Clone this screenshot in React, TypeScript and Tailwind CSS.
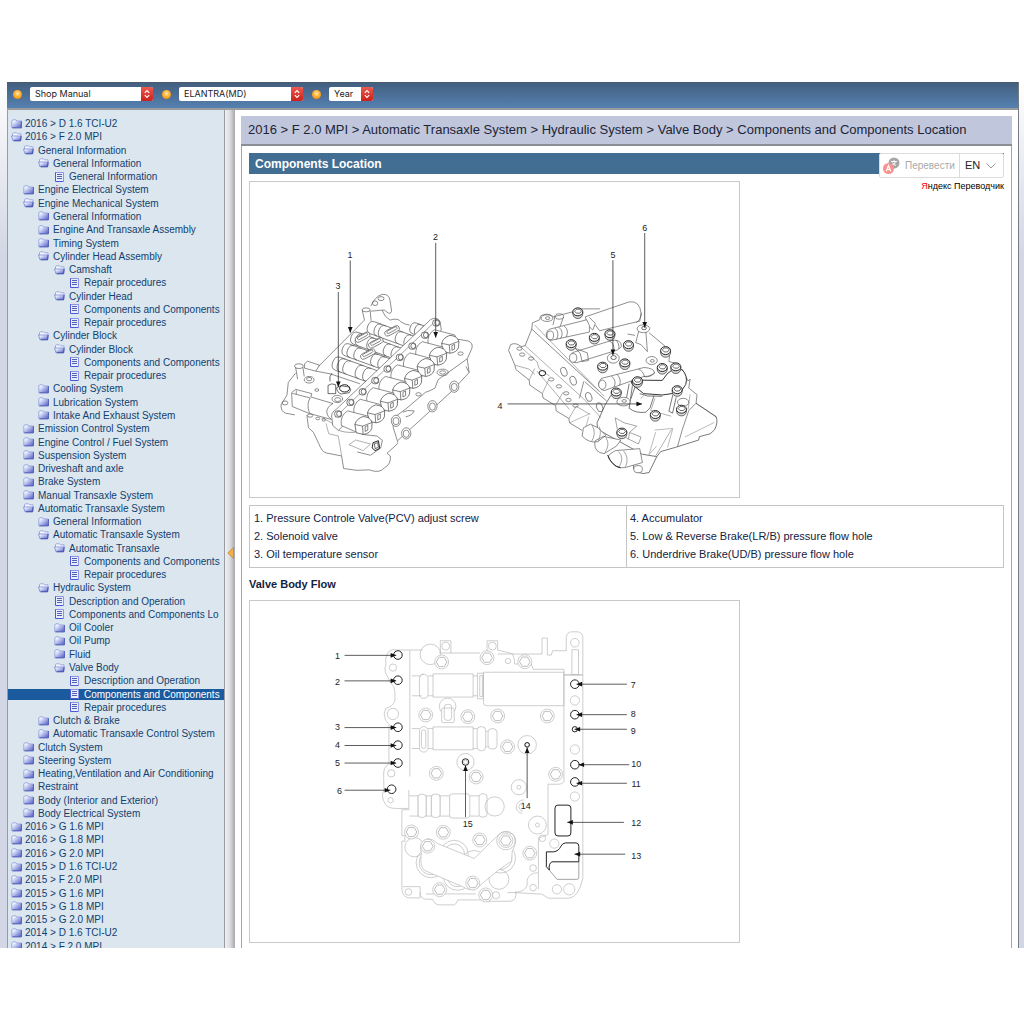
import { ReactNode } from "react";

type IconKind = "closed" | "open" | "page";

interface TreeRow {
  level: number;
  kind: IconKind;
  label: string;
  active?: boolean;
}

const row = (level: number, kind: IconKind, label: string, active = false): TreeRow => ({ level, kind, label, active });

const TREE: TreeRow[] = [
  row(0, "closed", "2016 > D 1.6 TCI-U2"),
  row(0, "open", "2016 > F 2.0 MPI"),
  row(1, "open", "General Information"),
  row(2, "open", "General Information"),
  row(3, "page", "General Information"),
  row(1, "closed", "Engine Electrical System"),
  row(1, "open", "Engine Mechanical System"),
  row(2, "closed", "General Information"),
  row(2, "closed", "Engine And Transaxle Assembly"),
  row(2, "closed", "Timing System"),
  row(2, "open", "Cylinder Head Assembly"),
  row(3, "open", "Camshaft"),
  row(4, "page", "Repair procedures"),
  row(3, "open", "Cylinder Head"),
  row(4, "page", "Components and Components"),
  row(4, "page", "Repair procedures"),
  row(2, "open", "Cylinder Block"),
  row(3, "open", "Cylinder Block"),
  row(4, "page", "Components and Components"),
  row(4, "page", "Repair procedures"),
  row(2, "closed", "Cooling System"),
  row(2, "closed", "Lubrication System"),
  row(2, "closed", "Intake And Exhaust System"),
  row(1, "closed", "Emission Control System"),
  row(1, "closed", "Engine Control / Fuel System"),
  row(1, "closed", "Suspension System"),
  row(1, "closed", "Driveshaft and axle"),
  row(1, "closed", "Brake System"),
  row(1, "closed", "Manual Transaxle System"),
  row(1, "open", "Automatic Transaxle System"),
  row(2, "closed", "General Information"),
  row(2, "open", "Automatic Transaxle System"),
  row(3, "open", "Automatic Transaxle"),
  row(4, "page", "Components and Components"),
  row(4, "page", "Repair procedures"),
  row(2, "open", "Hydraulic System"),
  row(3, "page", "Description and Operation"),
  row(3, "page", "Components and Components Lo"),
  row(3, "closed", "Oil Cooler"),
  row(3, "closed", "Oil Pump"),
  row(3, "closed", "Fluid"),
  row(3, "open", "Valve Body"),
  row(4, "page", "Description and Operation"),
  row(4, "page", "Components and Components", true),
  row(4, "page", "Repair procedures"),
  row(2, "closed", "Clutch & Brake"),
  row(2, "closed", "Automatic Transaxle Control System"),
  row(1, "closed", "Clutch System"),
  row(1, "closed", "Steering System"),
  row(1, "closed", "Heating,Ventilation and Air Conditioning"),
  row(1, "closed", "Restraint"),
  row(1, "closed", "Body (Interior and Exterior)"),
  row(1, "closed", "Body Electrical System"),
  row(0, "closed", "2016 > G 1.6 MPI"),
  row(0, "closed", "2016 > G 1.8 MPI"),
  row(0, "closed", "2016 > G 2.0 MPI"),
  row(0, "closed", "2015 > D 1.6 TCI-U2"),
  row(0, "closed", "2015 > F 2.0 MPI"),
  row(0, "closed", "2015 > G 1.6 MPI"),
  row(0, "closed", "2015 > G 1.8 MPI"),
  row(0, "closed", "2015 > G 2.0 MPI"),
  row(0, "closed", "2014 > D 1.6 TCI-U2"),
  row(0, "closed", "2014 > F 2.0 MPI"),
];

const INDENT = ["pl-[3px] gap-[3px]", "pl-[15px] gap-1", "pl-[30px] gap-1", "pl-[46px] gap-1", "pl-[61px] gap-1"];

function TreeIcon({ kind }: { kind: IconKind }) {
  if (kind === "page") {
    return (
      <svg viewBox="0 0 11 10" className="h-[10px] w-[11px] shrink-0">
        <path d="M1 .5h8.500v9H1z" fill="#e9eeff" />
        <path d="M1.500 0v9.500h8" fill="none" stroke="#4a58dc" />
        <path d="M1.500.5h8v9" fill="none" stroke="#8b94e4" />
        <path d="M3 2.500h5M3 4.500h5M3 6.500h5" stroke="#5560b4" />
      </svg>
    );
  }
  if (kind === "open") {
    return (
      <svg viewBox="0 0 11 10" className="h-[10px] w-[11px] shrink-0">
        <path d="M1.500 4V1.500L2.500.8h3l1 1h3.500V4" fill="#f1f5ff" stroke="#8b99dc" strokeWidth="0.8" />
        <path d="M.5 4h9.800l-.6 4.800H2z" fill="url(#folderFill)" stroke="#6a78cf" strokeWidth="0.7" />
        <path d="M10 4.200l-.4 4.500H3" fill="none" stroke="#454ea8" strokeWidth="0.9" />
      </svg>
    );
  }
  return (
    <svg viewBox="0 0 11 10" className="h-[10px] w-[11px] shrink-0">
      <path d="M.8 8.800V2L1.800.8h3l1 1.200h4.600v6.800z" fill="url(#folderFill)" stroke="#8b99dc" strokeWidth="0.8" />
      <path d="M10.400 2.200v6.600H1.500" fill="none" stroke="#4a53b4" strokeWidth="0.9" />
    </svg>
  );
}

function Tree() {
  return (
    <nav aria-label="Manual contents" className="flex w-[218px] shrink-0 flex-col overflow-hidden border-r border-l border-[#979ba3] bg-[#dbe6ee] pt-[7px]">
      <ul className="-mb-[5px] flex flex-1 flex-col text-[10px] leading-[13px] text-[#123e70]">
        {TREE.map((item, i) => (
          <li key={i} className="flex min-h-[13px] flex-1 items-center">
            <a
              href="#"
              aria-current={item.active ? "page" : undefined}
              className={`flex h-[11px] w-full items-center whitespace-nowrap ${INDENT[item.level]} ${
                item.active ? "bg-[#1c5a9e] text-white" : ""
              }`}
            >
              <TreeIcon kind={item.kind} />
              <span>{item.label}</span>
            </a>
          </li>
        ))}
      </ul>
    </nav>
  );
}

function Picker({ label, value, width }: { label: string; value: string; width: string }) {
  return (
    <div className="flex items-center gap-[8px]">
      <span className="h-[9px] w-[9px] rounded-full bg-[radial-gradient(circle_at_50%_40%,#ffe9b8_0%,#ffb02e_45%,#e0760c_100%)]" />
      <span className={`relative flex h-[14px] ${width}`}>
        <select
          aria-label={label}
          className="h-full w-full appearance-none rounded-[2px] bg-white pl-[5px] font-[family-name:Inter,sans-serif] text-[9px] leading-[14px] text-[#222]"
        >
          <option>{value}</option>
        </select>
        <svg viewBox="0 0 12 14" className="pointer-events-none absolute top-0 right-0 h-[14px] w-[12px]">
          <path d="M0 0h10a2 2 0 0 1 2 2v10a2 2 0 0 1-2 2H0z" fill="url(#stepFill)" />
          <path d="M3.800 5.800L6 3.500l2.200 2.300M3.800 8.200L6 10.500l2.200-2.300" fill="none" stroke="#fff" strokeWidth="1.100" />
        </svg>
      </span>
    </div>
  );
}

function TranslateWidget() {
  return (
    <div className="absolute top-0 right-0 flex flex-col items-end">
      <div className="flex h-[25px] items-stretch rounded-[2px] border border-[#dcdcdc] bg-white">
        <button className="flex w-[80px] items-center gap-[5px] border-r border-[#dcdcdc] pl-[3px] text-[10px] text-[#a9a9a9]">
          <svg viewBox="0 0 17 18" className="h-[18px] w-[17px]">
            <circle cx="11" cy="6" r="5.500" fill="#a6a6a6" />
            <path d="M8 4.500h6M11 3v1.500M9 8.500q3-1 3.500-4M9.500 5.500q1 2.500 3.500 3" stroke="#fff" strokeWidth="0.9" fill="none" />
            <circle cx="5.500" cy="11.500" r="5.500" fill="#f9918f" />
            <path d="M3.300 14.300l2.200-5.800 2.200 5.800M4.100 12.300h2.800" stroke="#fff" strokeWidth="1.200" fill="none" />
          </svg>
          Перевести
        </button>
        <button className="flex w-[43px] items-center justify-between pr-[7px] pl-[5px] text-[11px] text-[#222]">
          EN
          <svg viewBox="0 0 10 6" className="h-[6px] w-[10px]">
            <path d="M.5.500L5 5 9.500.500" fill="none" stroke="#999" />
          </svg>
        </button>
      </div>
      <a href="#" className="mt-[3px] text-[9px] leading-[11px] text-black">
        <span className="text-[#f00]">Я</span>ндекс Переводчик
      </a>
    </div>
  );
}

/* Drawing helpers, all in thirds of a pixel */

type Pt = [number, number];

function Callout({ n, at, from, to }: { n: number; at: Pt; from: Pt; to: Pt }) {
  const angle = (Math.atan2(to[1] - from[1], to[0] - from[0]) * 180) / Math.PI;
  return (
    <g>
      <path d={`M${from[0]} ${from[1]}L${to[0]} ${to[1]}`} stroke="#333" strokeWidth="2.400" />
      <path d="M0 0L-17 -7V7z" transform={`translate(${to[0]} ${to[1]}) rotate(${angle})`} fill="#111" stroke="none" />
      <text x={at[0]} y={at[1] + 10} textAnchor="middle" fontSize="27" fill="#222" stroke="none">
        {n}
      </text>
    </g>
  );
}

function Spool({ x, y, length, r, rings }: { x: number; y: number; length: number; r: number; rings: number[] }) {
  return (
    <g transform={`translate(${x} ${y}) rotate(20)`}>
      <path d={`M0 ${-r}H${length}V${r}H0Q${-r * 0.8} ${r} ${-r * 0.8} 0Q${-r * 0.8} ${-r} 0 ${-r}`} fill="#fff" />
      {rings.map((p) => (
        <path key={p} d={`M${p} ${-r}Q${p - r * 0.8} ${-r} ${p - r * 0.8} 0T${p} ${r}`} fill="none" />
      ))}
    </g>
  );
}

function Bolt({ x, y, r = 13 }: { x: number; y: number; r?: number }) {
  return (
    <g transform={`translate(${x} ${y})`} stroke="#222">
      <path d={`M${-r - 2} 0v7q3 ${r} ${r + 2} ${r}t${r + 2} ${-r}v-7`} fill="#ddd" />
      <ellipse rx={r + 2} ry={r - 1} fill="#fff" strokeWidth="3" />
      <path d={`M${-r + 3} -2l6 -6h10l5 6l-5 6h-10z`} fill="#fff" />
    </g>
  );
}

const SOLENOIDS: Pt[] = [[550, 402], [513, 438], [476, 472], [438, 508], [402, 543], [365, 577], [326, 612], [288, 647]];
const PLATE_BOLTS: Pt[] = [[500, 338], [466, 375], [428, 408], [390, 442], [353, 477], [316, 512], [278, 546], [241, 578], [204, 613]];

function FrontAssembly() {
  return (
    <g transform="translate(60 87)" fill="none" stroke="#555" strokeWidth="2">
      <path d="M145 470L284 330M277 300L284 330M301 300L304 332M303 288Q316 258 338 252Q358 251 361 270L366 303Q363 314 352 306Q345 297 335 300L304 303" />
      <ellipse cx="289" cy="299" rx="12" ry="6" />
      <ellipse cx="334" cy="265" rx="9" ry="6" />
      <ellipse cx="316" cy="279" rx="8" ry="7" />
      <path d="M337 300Q344 320 361 330Q386 322 395 336Q408 344 420 345" />
      <Spool x={435} y={355} length={70} r={17} rings={[15, 32]} />
      <Spool x={308} y={353} length={145} r={19} rings={[22, 36, 90, 118]} />
      <Spool x={258} y={385} length={170} r={19} rings={[15, 52, 105, 130, 148]} />
      <Spool x={232} y={420} length={140} r={19} rings={[16, 38, 92, 115]} />
      <Spool x={204} y={462} length={120} r={21} rings={[16, 34, 74, 98]} />
      <g fill="#fff">
        <rect x="-24" y="-8" width="48" height="17" rx="9" transform="translate(367 362) rotate(-28)" />
        <rect x="-17" y="-4" width="34" height="8" rx="4" transform="translate(367 360) rotate(-28)" />
        <rect x="-24" y="-8" width="48" height="17" rx="9" transform="translate(278 381) rotate(-28)" />
        <rect x="-17" y="-4" width="34" height="8" rx="4" transform="translate(278 379) rotate(-28)" />
        <rect x="-24" y="-8" width="48" height="17" rx="9" transform="translate(318 398) rotate(-28)" />
        <rect x="-17" y="-4" width="34" height="8" rx="4" transform="translate(318 396) rotate(-28)" />
        <rect x="-24" y="-8" width="48" height="17" rx="9" transform="translate(294 432) rotate(-28)" />
        <rect x="-17" y="-4" width="34" height="8" rx="4" transform="translate(294 430) rotate(-28)" />
      </g>
      {/* left shoulder and sensor */}
      <path d="M103 462L112 454L148 466L137 484L103 475zM137 484L180 492L270 522M76 472L82 508M98 472L102 500M76 490L54 518L50 556L32 586Q31 606 46 611L74 616" />
      <ellipse cx="86" cy="469" rx="13" ry="7" />
      <ellipse cx="117" cy="510" rx="15" ry="10" />
      <ellipse cx="117" cy="508" rx="8" ry="5" />
      <ellipse cx="140" cy="541" rx="6" ry="4" />
      <ellipse cx="44" cy="580" rx="9" ry="6" />
      <path d="M64 549L76 539L125 552L122 562L189 582Q171 590 170 608Q172 622 184 630L118 612L66 591zM66 551L120 565Q108 582 118 611M78 542V553" fill="#fff" />
      <path d="M186 490Q176 500 180 515M174 527Q185 519 197 525V552H174zM200 534L212 528L238 532Q247 540 238 549L214 553Q200 548 200 534" stroke="#222" />
      <ellipse cx="224" cy="536" rx="15" ry="11" stroke="#222" strokeWidth="3" />
      <ellipse cx="202" cy="568" rx="16" ry="11" />
      <ellipse cx="203" cy="570" rx="9" ry="6" />
      {/* right flange */}
      <path d="M556 386L597 393Q613 399 608 416L594 447L600 488L545 547L385 693M594 447L506 510L497 535Q480 545 468 548L409 598M600 488L590 470M409 598L368 628L371 655L385 700" />
      <ellipse cx="574" cy="431" rx="8" ry="5" />
      <ellipse cx="520" cy="488" rx="17" ry="10" />
      <ellipse cx="520" cy="488" rx="9" ry="5" />
      <ellipse cx="447" cy="554" rx="8" ry="5" />
      {[[555, 531], [489, 590], [410, 672], [379, 634]].map(([x, y]) => (
        <g key={x} fill="#fff">
          <ellipse cx={x} cy={y} rx="14" ry="17" />
          <ellipse cx={x} cy={y + 1} rx="9" ry="11" />
        </g>
      ))}
      <path d="M400 608Q412 600 434 604Q428 618 408 622M110 616L115 655L130 669L146 703Q155 727 168 731L215 740L221 778Q262 787 299 782Q329 794 344 776Q365 765 362 740L352 732L385 702" />
      <path d="M168 642L176 673L205 680L215 740M237 706L257 692L302 704L280 724zM155 625L205 650" stroke="#888" />
      <path d="M262 728L302 738L333 716L338 693L322 680L276 675" />
      <ellipse cx="120" cy="618" rx="8" ry="5" />
      <ellipse cx="143" cy="627" rx="6" ry="4" />
      <ellipse cx="161" cy="631" rx="5" ry="4" />
      <path d="M310 700L326 694L330 717L316 724L307 716z" stroke="#222" strokeWidth="3" />
      <path d="M314 703L324 700L326 714L316 718z" stroke="#222" />
      {/* solenoid pack */}
      <path d="M186 628Q180 610 200 598L484 328Q502 318 512 334L516 360L205 663L188 648z" fill="#fff" />
      <path d="M196 623L490 341M206 662Q220 670 255 669" stroke="#777" />
      {SOLENOIDS.map(([x, y]) => (
        <g key={x} transform={`translate(${x} ${y})`}>
          <path d="M-55 -43Q-78 -29 -74 1L-27 22L10 -8L7 -27z" fill="#fff" stroke="#555" />
          <path d="M-33 -2Q-28 -20 -8 -26Q13 -25 19 -8L18 10Q13 25 -7 28L-29 23z" fill="#fff" stroke="#333" />
          <path d="M-33 -2L-10 3L19 -8M-10 3L-8 28M-2 5V19L6 15V1z" stroke="#444" />
        </g>
      ))}
      {PLATE_BOLTS.map(([x, y]) => (
        <g key={x} fill="#fff" stroke="#333">
          <rect x={x - 10} y={y - 9} width="21" height="19" rx="8" />
          <ellipse cx={x + 3} cy={y} rx="7" ry="8" />
        </g>
      ))}
      <Callout n={1} at={[240, 131]} from={[241, 150]} to={[241, 368]} />
      <Callout n={2} at={[498, 77]} from={[499, 97]} to={[499, 383]} />
      <Callout n={3} at={[204, 227]} from={[205, 245]} to={[205, 532]} />
    </g>
  );
}

const REAR_BOLTS: Pt[] = [
  [265, 305], [245, 401], [315, 382], [362, 371], [340, 469], [407, 459], [418, 404], [530, 422], [520, 473],
  [561, 471], [445, 513], [381, 547], [565, 540], [578, 599], [499, 615], [398, 668],
];

function RearAssembly() {
  return (
    <g transform="translate(723 87)" fill="none" stroke="#555" strokeWidth="2">
      <path d="M126 357L128 338L150 329L152 318Q172 305 192 320L250 305M275 296H332M126 357L330 545M126 357L106 407L94 410Q78 396 62 404L56 421L75 466L78 479L118 511L120 526L158 552L160 565L198 588L200 604L238 627L240 640L278 663" />
      <path d="M135 345L345 560M106 407L195 488L283 568L335 625M75 466L118 478L136 494M94 412L142 456L148 476L180 499M118 511L135 476M158 552L177 510M198 588L220 548M238 627L260 590L302 615M142 484L240 600" stroke="#888" />
      <path d="M283 515L270 566M286 516L352 574" />
      <path d="M298 622L290 650M240 640L302 612" stroke="#999" />
      <ellipse cx="172" cy="324" rx="18" ry="10" />
      <ellipse cx="174" cy="324" rx="7" ry="4" />
      <path d="M196 320L190 345M222 320L212 348" />
      <ellipse cx="209" cy="319" rx="13" ry="8" />
      {[[89, 416], [97, 434], [124, 446], [185, 509], [208, 530], [230, 551], [237, 571], [258, 588]].map(([x, y]) => (
        <ellipse key={x} cx={x} cy={y} rx="8" ry="5" />
      ))}
      <ellipse cx="158" cy="490" rx="10" ry="8" stroke="#222" strokeWidth="3" />
      {[[223, 486], [251, 513], [298, 562], [331, 593]].map(([x, y]) => (
        <ellipse key={x} cx={x} cy={y} rx="9" ry="14" transform={`rotate(-18 ${x} ${y})`} />
      ))}
      {/* accumulator tubes */}
      <path d="M288 320L420 275Q452 270 456 309L452 333L331 362L318 345" fill="#fff" />
      <path d="M288 320L292 342L310 360L318 340L300 322M441 337Q456 329 457 308" />
      <path d="M181 357L292 329Q304 345 300 366L184 391Q168 388 170 371Q172 359 181 357" fill="#fff" />
      <path d="M207 351Q225 365 213 386M196 354Q211 367 201 389M224 348Q240 360 230 381" />
      <ellipse cx="182" cy="376" rx="10" ry="13" fill="#fff" />
      <path d="M249 428L365 392Q396 385 397 410L385 420L260 459Q242 457 243 438z" fill="#fff" />
      <path d="M257 415L294 429L297 452L278 455L272 430zM360 393Q376 399 374 423M379 390Q391 399 389 417" />
      <ellipse cx="251" cy="444" rx="11" ry="13" fill="#fff" />
      <path d="M336 506L465 473Q496 475 497 490Q480 505 465 500L344 543Q326 535 328 519z" fill="#fff" />
      <path d="M367 499Q384 514 374 532M448 478Q464 484 466 502M383 493Q398 509 391 527M465 500Q485 501 497 488" />
      <ellipse cx="339" cy="525" rx="11" ry="14" fill="#fff" />
      {/* top face */}
      <path d="M450 358L440 398L456 404L475 425L470 358M415 372L438 376M480 368L530 410M542 436L540 455L570 463M580 478L598 514L604 508L600 535L625 555L622 581L600 603L580 662L566 712" />
      <ellipse cx="463" cy="356" rx="19" ry="12" fill="#fff" />
      <ellipse cx="465" cy="354" rx="7" ry="5" stroke="#222" />
      <ellipse cx="372" cy="445" rx="18" ry="15" fill="#fff" />
      <ellipse cx="373" cy="443" rx="8" ry="6" stroke="#222" />
      <ellipse cx="488" cy="452" rx="17" ry="12" />
      <ellipse cx="490" cy="453" rx="6" ry="4" />
      <path d="M535 492L520 512L430 511Q422 515 430 525L464 552L520 556L575 548L591 524Q598 498 580 480L557 475z" fill="#fff" stroke="#333" strokeWidth="3" />
      <path d="M420 522L411 570M430 527L420 596Q440 612 470 608L483 595L495 558M552 555L540 605L551 611L562 563M440 525L425 568M452 552L475 559L520 560" stroke="#333" />
      <path d="M464 558L455 567M498 566L485 603L547 620M604 554L598 600M622 581L685 624M548 660L500 740" stroke="#888" />
      <path d="M622 581L682 621Q690 636 678 661L665 673L632 682L630 692L560 714L515 727L503 743L480 790Q462 797 445 789Q430 783 434 765M365 557L347 587L323 640L325 660L460 735L503 742" stroke="#333" />
      <path d="M588 683L677 639M497 662L552 657L536 714M500 668L480 736L503 710" stroke="#999" />
      <ellipse cx="403" cy="576" rx="20" ry="13" fill="#fff" />
      <ellipse cx="405" cy="574" rx="7" ry="4" />
      <ellipse cx="583" cy="578" rx="17" ry="12" />
      <path d="M378 625L384 658L412 686L448 704L456 683L421 669L443 650L405 640zM421 669L418 690" stroke="#777" />
      {/* lower solenoids */}
      <path d="M282 655L303 644L326 655L350 678L325 697Q298 702 278 680zM318 694L342 681L395 692L382 710L345 733Q315 730 316 702zM360 736L378 724L452 718L460 760L412 774Q382 781 370 761Q352 745 360 736" fill="#fff" />
      <path d="M308 647Q322 670 307 696M350 685Q364 705 346 732M388 727Q407 745 389 775M403 725Q421 743 409 774M330 652Q338 670 326 697" stroke="#777" />
      <path d="M355 737Q366 769 394 776" stroke="#222" strokeWidth="3" />
      <ellipse cx="447" cy="780" rx="13" ry="11" fill="#fff" />
      {REAR_BOLTS.map(([x, y]) => (
        <Bolt key={x} x={x} y={y} />
      ))}
      <Callout n={4} at={[30, 587]} from={[53, 583]} to={[459, 583]} />
      <Callout n={5} at={[371, 131]} from={[371, 149]} to={[371, 436]} />
      <Callout n={6} at={[467, 50]} from={[467, 67]} to={[467, 353]} />
    </g>
  );
}

/* [x, y] of hex bolts on the flow plate */
const HEX: Pt[] = [
  [577, 184], [714, 171], [828, 183], [529, 344], [656, 349], [746, 347], [896, 347],
  [776, 440], [921, 523], [561, 520], [681, 531], [486, 697], [582, 698], [692, 721],
  [535, 740], [771, 723], [671, 851], [571, 871], [710, 887], [843, 761],
];

function FlowPlate() {
  return (
    <g fill="none" stroke="#b4b4b4" strokeWidth="2">
      <path d="M481 530V148H440Q415 140 408 175L409 190Q404 205 407 215L422 245Q436 258 436 275V300Q430 320 408 324Q399 340 408 360L418 372V492Q400 500 402 530L403 570Q392 590 408 614Q415 626 440 626H478V570" />
      <path d="M481 148H520M570 157H693M573 157V120H605V157M714 157V120H746V148L791 159L797 179V190H848L853 206H946V223H1002M746 160H880V112H896V163H908L912 150H953V110Q955 93 970 93H987Q1003 95 1003 110V837Q990 895 960 897H900L878 884H867L798 880" />
      <path d="M946 223V545Q940 553 930 553H898V705L869 716V870M970 147H990V222H970zM1003 223H946" />
      {/* bores */}
      <path d="M487 226H516M487 286H516M550 226H551M516 220Q536 220 536 235V280Q536 294 523 294Q510 294 510 280V235Q510 220 523 222M536 226H551M536 286H551M551 220H672V290H551zM672 226H685M672 286H685M685 218H703V295H685zM692 225H700V288H692z" />
      <path d="M703 215H946V316H712Q703 316 703 305z" />
      <path d="M487 385H510M487 445H510M551 380H672V449H551zM536 385H551M536 445H551M672 385H684M672 445H684" />
      <rect x="510" y="379" width="26" height="77" rx="13" />
      <rect x="516" y="389" width="13" height="56" rx="6" />
      <rect x="684" y="379" width="26" height="73" rx="12" />
      <rect x="717" y="385" width="27" height="62" rx="12" />
      <path d="M710 393H717M710 440H717" />
      <path d="M480 588H690M480 649H690M506 588V649M530 588V649M546 588V649M572 588V649" />
      <rect x="506" y="583" width="24" height="70" rx="9" fill="#fff" />
      <rect x="546" y="583" width="26" height="70" rx="9" fill="#fff" />
      <rect x="601" y="582" width="61" height="73" rx="8" fill="#fff" />
      <rect x="690" y="582" width="24" height="70" rx="9" fill="#fff" />
      <circle cx="737" cy="620" r="29" />
      <circle cx="543" cy="161" r="31" />
      <circle cx="589" cy="136" r="12" />
      <circle cx="730" cy="136" r="12" />
      <circle cx="777" cy="181" r="8" />
      <circle cx="595" cy="318" r="25" fill="#fff" />
      <rect x="577" y="323" width="38" height="44" rx="5" fill="#fff" />
      <rect x="585" y="312" width="22" height="48" rx="8" />
      {/* separator cover at the bottom */}
      <circle cx="495" cy="743" r="29" />
      <circle cx="545" cy="790" r="45" />
      <circle cx="545" cy="790" r="36" />
      <circle cx="615" cy="764" r="42" />
      <circle cx="615" cy="764" r="31" />
      <circle cx="675" cy="795" r="42" />
      <circle cx="755" cy="776" r="45" />
      <circle cx="755" cy="776" r="34" />
      <circle cx="625" cy="830" r="43" />
      <circle cx="625" cy="830" r="32" />
      <circle cx="750" cy="840" r="30" />
      <path d="M516 760Q505 730 535 717Q550 717 565 732L675 777L742 712Q765 685 792 705Q810 720 790 755L788 785Q755 805 700 852Q675 885 640 862L525 813Q510 800 516 760" fill="#fff" />
      <circle cx="771" cy="723" r="28" />
      <path d="M480 630H457V708H466V725H457V870Q459 894 480 896H512V862H460M512 880Q512 899 530 900H550Q555 916 570 917H615Q622 914 626 902H700M530 884H680M706 906H780Q799 906 801 889V875M775 880H801Q830 875 835 858V843Q840 820 867 820" />
      <circle cx="477" cy="878" r="10" />
      <circle cx="741" cy="888" r="11" />
      {[
        [430, 201, 11], [430, 341, 17], [425, 520, 11], [423, 601, 8], [979, 126, 13], [979, 300, 14],
        [979, 448, 14], [979, 590, 14], [917, 732, 14], [925, 870, 14], [962, 870, 17], [881, 716, 10],
        [853, 806, 10], [853, 865, 10],
      ].map(([x, y, r]) => (
        <circle key={`${x}-${y}`} cx={x} cy={y} r={r} />
      ))}
      {[[810, 562, 23], [866, 676, 27], [835, 434, 28], [649, 486, 26]].map(([x, y, r]) => (
        <g key={x}>
          <circle cx={x} cy={y} r={r} />
          <circle cx={x} cy={y} r="6" />
        </g>
      ))}
      <path d="M826 600Q805 602 802 620Q802 638 820 641M824 607Q810 612 810 621Q812 633 822 635" />
      {HEX.map(([x, y]) => (
        <g key={`${x}-${y}`} transform={`translate(${x} ${y})`}>
          <circle r="21" fill="#fff" />
          <path d="M-16 0L-8 -14H8L16 0L8 14H-8z" strokeWidth="3" stroke="#bdbdbd" />
        </g>
      ))}
      <g stroke="#222" strokeWidth="3">
        {[[445, 163], [445, 239], [445, 381], [445, 435], [445, 489], [426, 568], [979, 251], [979, 343], [979, 494], [979, 546]].map(([x, y]) => (
          <circle key={`${x}-${y}`} cx={x} cy={y} r="13" />
        ))}
        <circle cx="979" cy="387" r="8" />
        <circle cx="835" cy="434" r="7" />
        <circle cx="649" cy="486" r="10" />
        <rect x="919" y="616" width="48" height="93" rx="9" />
        <path d="M893 757H915Q930 755 937 740Q942 730 951 730H983Q991 731 991 740V787H910Q899 792 902 812L893 802z" />
      </g>
      <path d="M902 812L925 840H985Q991 840 991 833V787" stroke="#777" />
      <Callout n={1} at={[263, 166]} from={[284, 164]} to={[440, 164]} />
      <Callout n={2} at={[263, 243]} from={[284, 241]} to={[440, 241]} />
      <Callout n={3} at={[263, 379]} from={[284, 382]} to={[440, 382]} />
      <Callout n={4} at={[263, 434]} from={[284, 436]} to={[440, 436]} />
      <Callout n={5} at={[263, 487]} from={[284, 489]} to={[440, 489]} />
      <Callout n={6} at={[269, 572]} from={[284, 571]} to={[422, 571]} />
      <Callout n={7} at={[1155, 252]} from={[1136, 251]} to={[984, 251]} />
      <Callout n={8} at={[1155, 341]} from={[1136, 343]} to={[984, 343]} />
      <Callout n={9} at={[1155, 390]} from={[1136, 387]} to={[978, 387]} />
      <Callout n={10} at={[1164, 492]} from={[1143, 494]} to={[990, 494]} />
      <Callout n={11} at={[1164, 550]} from={[1136, 550]} to={[984, 550]} />
      <Callout n={12} at={[1164, 670]} from={[1127, 668]} to={[956, 668]} />
      <Callout n={13} at={[1164, 768]} from={[1131, 764]} to={[978, 764]} />
      <Callout n={14} at={[831, 619]} from={[835, 595]} to={[835, 442]} />
      <Callout n={15} at={[656, 673]} from={[649, 652]} to={[649, 496]} />
    </g>
  );
}

function Figure({ label, viewBox, ratio, children }: { label: string; viewBox: string; ratio: string; children: ReactNode }) {
  return (
    <figure className={`w-full max-w-[491px] shrink-0 border border-[#c9c9c9] ${ratio}`}>
      <svg viewBox={viewBox} role="img" aria-label={label} className="block h-full w-full">
        {children}
      </svg>
    </figure>
  );
}

const LEGEND = [
  ["1. Pressure Controle Valve(PCV) adjust screw", "4. Accumulator"],
  ["2. Solenoid valve", "5. Low & Reverse Brake(LR/B) pressure flow hole"],
  ["3. Oil temperature sensor", "6. Underdrive Brake(UD/B) pressure flow hole"],
];

function Article() {
  return (
    <main className="flex min-w-0 flex-1 flex-col overflow-hidden pt-[6px] pr-[6px] pl-[6px]">
      <div className="flex h-[30px] shrink-0 items-center border-b-2 border-[#8b8d94] bg-[#c0c6dc] pl-[7px] text-[13px] whitespace-nowrap text-[#1c2537]">
        2016 &gt; F 2.0 MPI &gt; Automatic Transaxle System &gt; Hydraulic System &gt; Valve Body &gt; Components and Components Location
      </div>
      <div className="flex flex-1 flex-col overflow-hidden border-r border-l border-[#a5a5a5] px-[7px] pt-[7px] text-[#14233f]">
        <div className="relative shrink-0">
          <h1 className="flex h-[21px] items-center bg-[#416e92] pl-[6px] text-[12px] font-bold text-white">Components Location</h1>
          <TranslateWidget />
        </div>
        <div className="mt-[7px] flex flex-col">
          <Figure label="Valve body assembly" viewBox="0 0 1473 951" ratio="aspect-[491/317]">
            <FrontAssembly />
            <RearAssembly />
          </Figure>
          <table className="mt-[7px] w-full border border-[#c4c4c4] text-[11px] leading-[18px]">
            <tbody>
              {LEGEND.map(([left, right], i) => (
                <tr key={left}>
                  <td className={`w-1/2 border-r border-[#c4c4c4] pl-1 ${i === 0 ? "pt-[3px]" : ""} ${i === 2 ? "pb-[4px]" : ""}`}>{left}</td>
                  <td className={`pl-[3px] ${i === 0 ? "pt-[3px]" : ""} ${i === 2 ? "pb-[4px]" : ""}`}>{right}</td>
                </tr>
              ))}
            </tbody>
          </table>
          <h2 className="mt-[8px] mb-[8px] text-[11px] leading-[16px] font-bold">Valve Body Flow</h2>
          <Figure label="Valve body flow" viewBox="0 0 1473 1029" ratio="aspect-[491/343]">
            <FlowPlate />
          </Figure>
        </div>
      </div>
    </main>
  );
}

export default function App() {
  return (
    <div className="flex h-screen flex-col bg-white pt-[82px] pb-[76px] font-['Liberation_Sans',Arial,sans-serif]">
      <svg className="absolute h-0 w-0" aria-hidden="true">
        <defs>
          <linearGradient id="folderFill" x1="0" y1="0" x2="1" y2="1">
            <stop offset="0.2" stopColor="#eef4ff" />
            <stop offset="1" stopColor="#4c58c4" />
          </linearGradient>
          <linearGradient id="stepFill" x1="0" y1="0" x2="0" y2="1">
            <stop offset="0" stopColor="#ec5a50" />
            <stop offset="1" stopColor="#c9201a" />
          </linearGradient>
        </defs>
      </svg>
      <div className="flex min-h-0 flex-1">
        <div className="w-[7px] shrink-0 bg-linear-to-b from-white via-[#d3d6e4] via-20% to-[#d3d6e4]" />
        <div className="flex min-w-0 flex-1 flex-col border-r border-[#777b84]">
          <header className="flex h-[28px] shrink-0 items-center gap-[9px] border-t border-b-2 border-t-[#4a5a6c] border-b-[#9a9ca0] bg-linear-to-b from-[#435f80] to-[#5581b1] pb-[3px] pl-[6px]">
            <Picker label="Manual type" value="Shop Manual" width="w-[123px]" />
            <Picker label="Model" value="ELANTRA(MD)" width="w-[124px]" />
            <Picker label="Year" value="Year" width="w-[44px]" />
          </header>
          <div className="flex min-h-0 flex-1">
            <Tree />
            <div className="flex w-[10px] shrink-0 items-center justify-center bg-linear-to-r from-[#f1f1f3] via-[#dcdce0] to-[#a8a8ac] pt-12">
              <button aria-label="Collapse contents">
                <svg viewBox="0 0 7 12" className="h-[12px] w-[7px]">
                  <path d="M6.500.5v11L.8 6z" fill="#f3b04a" stroke="#b9802e" strokeWidth="0.7" />
                </svg>
              </button>
            </div>
            <Article />
          </div>
        </div>
        <div className="w-[5px] shrink-0 bg-linear-to-b from-white via-[#d3d6e4] via-20% to-[#d3d6e4]" />
      </div>
    </div>
  );
}
